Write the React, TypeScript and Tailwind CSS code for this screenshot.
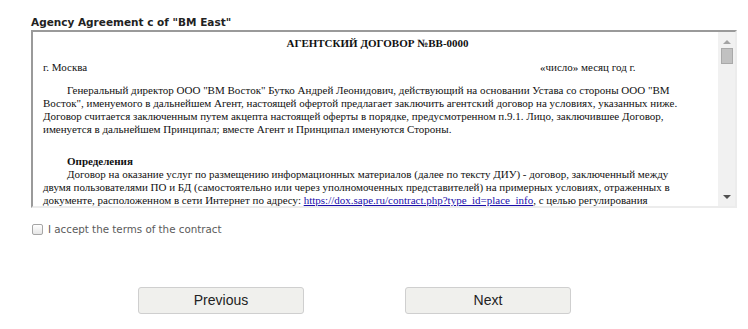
import React from "react";

const Scrollbar = () => {
  return (
    <div className="flex w-[17px] shrink-0 flex-col items-center bg-[#f1f1f1]">
      <div className="flex h-[16px] w-full items-end justify-center pb-[4px]">
        <span className="h-0 w-0 border-x-[4px] border-b-[4px] border-x-transparent border-b-[#a3a3a3]" />
      </div>
      <div className="h-[16px] w-[12px] border border-[#a9a9a9] bg-[#c1c1c1]" />
      <div className="flex-1" />
      <div className="flex h-[16px] w-full items-start justify-center pt-[5px]">
        <span className="h-0 w-0 border-x-[4px] border-t-[4px] border-x-transparent border-t-[#505050]" />
      </div>
    </div>
  );
};

const Contract = () => {
  return (
    <div
      className="flex-1 overflow-hidden whitespace-nowrap pl-[10px] pt-[5px] text-[11px] leading-[13px] text-[#111]"
      style={{ fontFamily: '"Liberation Serif", "Times New Roman", serif' }}
    >
      <p className="pr-[6px] text-center font-bold">АГЕНТСКИЙ ДОГОВОР №BB-0000</p>
      <div className="mt-[11px] flex">
        <span className="w-[497px]">г. Москва</span>
        <span>«число» месяц год г.</span>
      </div>
      <p className="mt-[10px]">
        <span className="pl-[24px]">
          Генеральный директор ООО "ВМ Восток" Бутко Андрей Леонидович, действующий на основании Устава со стороны ООО "ВМ
        </span>
        <br />
        Восток", именуемого в дальнейшем Агент, настоящей офертой предлагает заключить агентский договор на условиях, указанных ниже.
        <br />
        Договор считается заключенным путем акцепта настоящей оферты в порядке, предусмотренном п.9.1. Лицо, заключившее Договор,
        <br />
        именуется в дальнейшем Принципал; вместе Агент и Принципал именуются Стороны.
      </p>
      <p className="mt-[19px] pl-[24px] font-bold">Определения</p>
      <p>
        <span className="pl-[24px]">
          Договор на оказание услуг по размещению информационных материалов (далее по тексту ДИУ) - договор, заключенный между
        </span>
        <br />
        двумя пользователями ПО и БД (самостоятельно или через уполномоченных представителей) на примерных условиях, отраженных в
        <br />
        документе, расположенном в сети Интернет по адресу:{" "}
        <a className="text-[#1a0dab] underline" href="#">
          https://dox.sape.ru/contract.php?type_id=place_info
        </a>
        , с целью регулирования
      </p>
    </div>
  );
};

export default function App() {
  return (
    <div
      className="h-[329px] w-[748px] bg-white pl-[31px] pt-[16px]"
      style={{ fontFamily: '"DejaVu Sans", Verdana, sans-serif' }}
    >
      <h2 className="text-[10.5px] font-bold leading-[13px] text-[#222]">
        Agency Agreement c of "BM East"
      </h2>
      <div className="mt-[1px] flex h-[178px] w-[706px] border-2 border-b-[#ececec] border-l-[#9a9a9a] border-r-[#ececec] border-t-[#9a9a9a]">
        <Contract />
        <Scrollbar />
      </div>
      <label className="mt-[15px] flex items-center gap-[5px] text-[10.3px] leading-[13px] text-[#5a5a5a]">
        <span className="ml-[1px] h-[11px] w-[11px] rounded-[2px] border border-[#a6a6a6] bg-gradient-to-b from-white to-[#e6e6e6]" />
        I accept the terms of the contract
      </label>
      <div
        className="mt-[51px] flex gap-[101px] pl-[107px] text-[14px] text-[#222]"
        style={{ fontFamily: '"Liberation Sans", Arial, sans-serif' }}
      >
        <button className="h-[27px] w-[166px] rounded-[3px] border border-[#cfcfcf] bg-[#f0f0ed]">
          Previous
        </button>
        <button className="h-[27px] w-[166px] rounded-[3px] border border-[#cfcfcf] bg-[#f0f0ed]">
          Next
        </button>
      </div>
    </div>
  );
}
